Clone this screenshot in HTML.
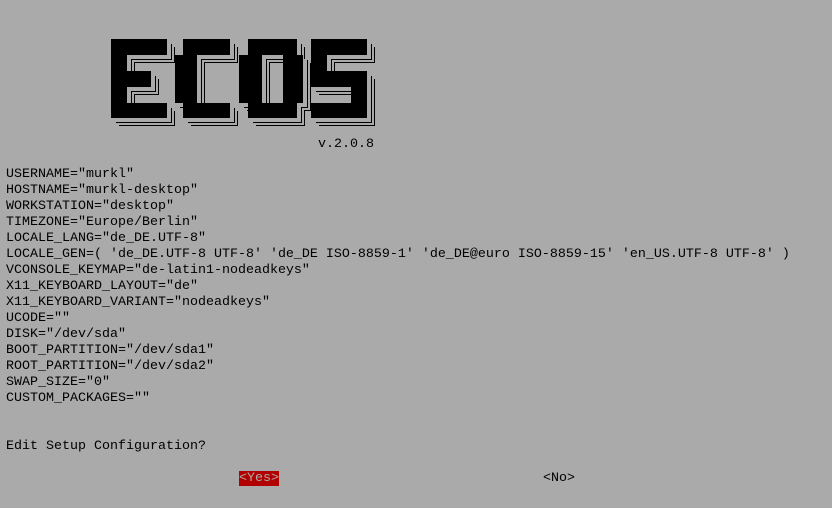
<!DOCTYPE html>
<html><head><style>
html,body{margin:0;padding:0;}
body{width:832px;height:508px;background:#aaaaaa;position:relative;overflow:hidden;font-family:"Liberation Mono",monospace;font-size:13.33px;color:#000;}
.t{position:absolute;left:6px;top:167px;white-space:pre;line-height:16px;}
.r{position:absolute;white-space:pre;line-height:16px;}
svg{position:absolute;left:0;top:0;}
</style></head><body>
<svg width="832" height="140" viewBox="0 0 832 140">
<defs>
<g id="L">
<rect x="111" y="39" width="16" height="79"/><rect x="111" y="39" width="56" height="16"/><rect x="111" y="71" width="40" height="16"/><rect x="111" y="103" width="56" height="15"/>
<rect x="183" y="39" width="47" height="16"/><rect x="175" y="55" width="22" height="48"/><rect x="183" y="103" width="47" height="15"/>
<rect x="248" y="39" width="49" height="16"/><rect x="239" y="55" width="23" height="48"/><rect x="283" y="55" width="20" height="48"/><rect x="248" y="103" width="49" height="15"/>
<rect x="311" y="39" width="56" height="16"/><rect x="311" y="55" width="16" height="16"/><rect x="311" y="71" width="56" height="16"/><rect x="351" y="87" width="16" height="16"/><rect x="311" y="103" width="56" height="15"/>
</g>
</defs>
<use href="#L" transform="translate(8,8)" fill="#000"/>
<use href="#L" transform="translate(7,7)" fill="#aaa"/>
<use href="#L" transform="translate(5,5)" fill="#000"/>
<use href="#L" transform="translate(4,4)" fill="#aaa"/>
<use href="#L" fill="#000"/>
</svg>
<div class="r" style="left:318px;top:137px;">v.2.0.8</div>
<div class="t">USERNAME="murkl"
HOSTNAME="murkl-desktop"
WORKSTATION="desktop"
TIMEZONE="Europe/Berlin"
LOCALE_LANG="de_DE.UTF-8"
LOCALE_GEN=( 'de_DE.UTF-8 UTF-8' 'de_DE ISO-8859-1' 'de_DE@euro ISO-8859-15' 'en_US.UTF-8 UTF-8' )
VCONSOLE_KEYMAP="de-latin1-nodeadkeys"
X11_KEYBOARD_LAYOUT="de"
X11_KEYBOARD_VARIANT="nodeadkeys"
UCODE=""
DISK="/dev/sda"
BOOT_PARTITION="/dev/sda1"
ROOT_PARTITION="/dev/sda2"
SWAP_SIZE="0"
CUSTOM_PACKAGES=""


Edit Setup Configuration?</div>
<div class="r" style="left:239px;top:471px;width:40px;height:15px;background:#b20000;color:#aaaaaa;">&lt;Yes&gt;</div>
<div class="r" style="left:543px;top:471px;">&lt;No&gt;</div>
</body></html>
